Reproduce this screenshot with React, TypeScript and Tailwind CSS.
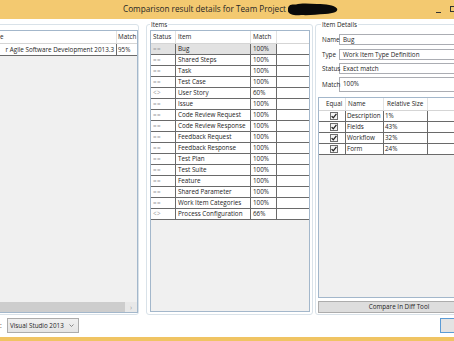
import React from 'react';

const items: [string, string, string][] = [
    ['==', 'Bug', '100%'],
    ['==', 'Shared Steps', '100%'],
    ['==', 'Task', '100%'],
    ['==', 'Test Case', '100%'],
    ['<>', 'User Story', '60%'],
    ['==', 'Issue', '100%'],
    ['==', 'Code Review Request', '100%'],
    ['==', 'Code Review Response', '100%'],
    ['==', 'Feedback Request', '100%'],
    ['==', 'Feedback Response', '100%'],
    ['==', 'Test Plan', '100%'],
    ['==', 'Test Suite', '100%'],
    ['==', 'Feature', '100%'],
    ['==', 'Shared Parameter', '100%'],
    ['==', 'Work Item Categories', '100%'],
    ['<>', 'Process Configuration', '66%'],
];

const parts: [string, string][] = [
    ['Description', '1%'],
    ['Fields', '43%'],
    ['Workflow', '32%'],
    ['Form', '24%'],
];

const details: [string, string][] = [
    ['Name', 'Bug'],
    ['Type', 'Work Item Type Definition'],
    ['Status', 'Exact match'],
];

const CheckBox = () => (
    <div className="w-[8px] h-[8px] border border-[#6f6f6f] bg-[#f4f4f4] flex items-center justify-center">
        <svg width="6" height="6" viewBox="0 0 6 6">
            <path d="M0.6 3.1 L2.3 4.8 L5.4 0.9" fill="none" stroke="#222" strokeWidth="1.3" />
        </svg>
    </div>
);

const App = () => {
    return (
        <div className="w-[454px] h-[341px] overflow-hidden bg-white flex flex-col font-['Open_Sans','Noto_Sans',sans-serif] text-[6.3px] text-[#1e1e1e]">
            {/* title bar */}
            <div className="h-[19px] shrink-0 bg-[#f3c970] flex items-center">
                <span className="pl-[123px] text-[8.2px] leading-none text-[#262626] whitespace-nowrap">
                    Comparison result details for Team Project
                </span>
                <svg width="52" height="15" viewBox="0 0 52 15" className="ml-[1px]">
                    <path
                        d="M1 7 C1 3 4 2 9 2.5 C14 1 22 1.5 30 2 C39 2.2 47 3 50 6.5 C51.5 9.5 47 11.5 38 12 C30 12.5 22 13.5 14 13 C8 14 2 12.5 1 9.5 Z"
                        fill="#0a0a0a"
                    />
                </svg>
                <div className="ml-auto flex items-center">
                    <div className="w-[5px] h-[1px] bg-[#333] mt-[5px]"></div>
                    <div className="w-[7px] h-[6px] border border-[#333] ml-[9px] mr-[-3px] -mt-[2px]"></div>
                </div>
            </div>

            {/* panels */}
            <div className="h-[296px] shrink-0 flex pt-[5px]">
                {/* left group */}
                <div className="ml-[-3px] w-[142px] h-[291px] shrink-0 border border-[#d9e2e9] rounded-[3px] pt-[5px] pb-[1px] flex flex-col">
                    <div className="flex-1 border border-[#a3b7cb] flex flex-col bg-[#f0f0f0]">
                        <div className="h-[13px] flex bg-white border-b border-[#d5d5d5] leading-[12px]">
                            <div className="w-[118px] border-r border-[#e2e2e2] pl-[1px]">e</div>
                            <div className="flex-1 pl-[1px]">Match</div>
                        </div>
                        <div className="h-[12px] flex bg-white border-b border-[#6a6a6a] leading-[11px]">
                            <div className="w-[118px] border-r border-[#6a6a6a] flex justify-end pr-[2px] overflow-hidden whitespace-nowrap">
                                r Agile Software Development 2013.3
                            </div>
                            <div className="flex-1 pl-[1px]">95%</div>
                        </div>
                        <div className="flex-1"></div>
                        <div className="h-[10px] flex bg-[#e8e8e8]">
                            <div className="w-[126px] bg-[#cdcdcd]"></div>
                            <div className="flex-1 flex items-center justify-center text-[#a0a0a0] text-[7px] leading-none">›</div>
                        </div>
                    </div>
                </div>

                {/* middle group */}
                <div className="relative ml-[7px] w-[167px] h-[291px] shrink-0 border border-[#d9e2e9] rounded-[3px] pt-[5px] pb-[2px] pl-[3px] pr-[2px] flex flex-col">
                    <span className="absolute left-[3px] -top-[5px] bg-white px-[1px] leading-[9px]">Items</span>
                    <div className="flex-1 border border-[#a3b7cb] flex flex-col bg-[#f0f0f0]">
                        <div className="h-[13px] flex bg-white border-b border-[#d5d5d5] leading-[12px]">
                            <div className="w-[25px] border-r border-[#e2e2e2] pl-[2px]">Status</div>
                            <div className="w-[75px] border-r border-[#e2e2e2] pl-[2px]">Item</div>
                            <div className="w-[26px] border-r border-[#e2e2e2] pl-[2px]">Match</div>
                            <div className="flex-1"></div>
                        </div>
                        {items.map(([status, name, match], i) => (
                            <div key={name} className="h-[11px] flex bg-white border-b border-[#6a6a6a] leading-[10px] whitespace-nowrap">
                                <div className={`w-[25px] border-r border-[#6a6a6a] pl-[2px] tracking-[0.5px] text-[#9c9c9c] ${i === 0 ? 'bg-[#e2e2e2]' : ''}`}>
                                    {status}
                                </div>
                                <div className={`w-[75px] border-r border-[#6a6a6a] pl-[2px] overflow-hidden ${i === 0 ? 'bg-[#e2e2e2]' : ''}`}>
                                    {name}
                                </div>
                                <div className={`w-[26px] border-r border-[#6a6a6a] pl-[2px] ${i === 0 ? 'bg-[#e2e2e2]' : ''}`}>
                                    {match}
                                </div>
                                <div className="flex-1"></div>
                            </div>
                        ))}
                        <div className="flex-1"></div>
                    </div>
                </div>

                {/* right group */}
                <div className="relative ml-[2px] w-[170px] h-[291px] shrink-0 border border-[#d9e2e9] rounded-[3px] pt-[9px] pb-[1px] flex flex-col">
                    <span className="absolute left-[5px] -top-[5px] bg-white px-[1px] leading-[9px] whitespace-nowrap">Item Details</span>
                    {details.map(([label, value], i) => (
                        <div key={label} className={`flex items-center ${i === 0 ? 'mb-[4px]' : 'mb-[3px]'}`}>
                            <div className="relative z-10 w-[23px] shrink-0 pl-[6px] whitespace-nowrap">{label}</div>
                            <div className="flex-1 h-[11px] border border-[#abadb3] bg-white pl-[3px] leading-[9px] whitespace-nowrap">
                                {value}
                            </div>
                        </div>
                    ))}
                    <div className="flex items-center">
                        <div className="relative z-10 w-[23px] shrink-0 pl-[6px] whitespace-nowrap">Match</div>
                        <div className="flex-1 h-[15px] border border-[#abadb3] bg-white pl-[3px] pt-[1px] leading-[9px]">100%</div>
                    </div>

                    <div className="flex-1 mt-[5px] ml-[2px] border border-[#a3b7cb] flex flex-col bg-[#f0f0f0]">
                        <div className="h-[13px] flex bg-white border-b border-[#d5d5d5] leading-[12px] whitespace-nowrap">
                            <div className="w-[27px] border-r border-[#e2e2e2] pl-[7px]">Equal</div>
                            <div className="w-[38px] border-r border-[#e2e2e2] pl-[2px]">Name</div>
                            <div className="w-[44px] border-r border-[#e2e2e2] pl-[3px]">Relative Size</div>
                            <div className="flex-1"></div>
                        </div>
                        {parts.map(([name, size]) => (
                            <div key={name} className="h-[11px] flex bg-white border-b border-[#6a6a6a] leading-[10px] whitespace-nowrap">
                                <div className="w-[27px] border-r border-[#6a6a6a] pl-[11px] flex items-center">
                                    <CheckBox />
                                </div>
                                <div className="w-[38px] border-r border-[#6a6a6a] pl-[1px]">{name}</div>
                                <div className="w-[44px] border-r border-[#6a6a6a] pl-[1px]">{size}</div>
                                <div className="flex-1"></div>
                            </div>
                        ))}
                        <div className="flex-1"></div>
                    </div>

                    <div className="mt-[3px] ml-[2px] w-[162px] h-[12px] border border-[#acacac] bg-[#dddddd] flex items-center justify-center leading-none whitespace-nowrap">
                        Compare In Diff Tool
                    </div>
                </div>
            </div>

            {/* bottom row */}
            <div className="h-[22px] shrink-0 flex items-start pt-[3px]">
                <span className="w-[2px] leading-[15px] overflow-hidden">:</span>
                <div className="ml-[5px] w-[72px] h-[15px] border border-[#acacac] bg-gradient-to-b from-[#f0f0f0] to-[#e5e5e5] flex items-center pl-[2px] whitespace-nowrap">
                    <span>Visual Studio 2013</span>
                    <svg width="5" height="3" viewBox="0 0 5 3" className="ml-auto mr-[4px]">
                        <path d="M0.5 0.5 L2.5 2.5 L4.5 0.5" fill="none" stroke="#707070" strokeWidth="0.8" />
                    </svg>
                </div>
                <div className="ml-auto mr-[-6px] w-[20px] h-[15px] border border-[#5b9bd5] bg-[#e3e3e3]"></div>
            </div>

            {/* bottom frame */}
            <div className="h-[4px] shrink-0 bg-[#f0c463]"></div>
        </div>
    );
};

export default App;
